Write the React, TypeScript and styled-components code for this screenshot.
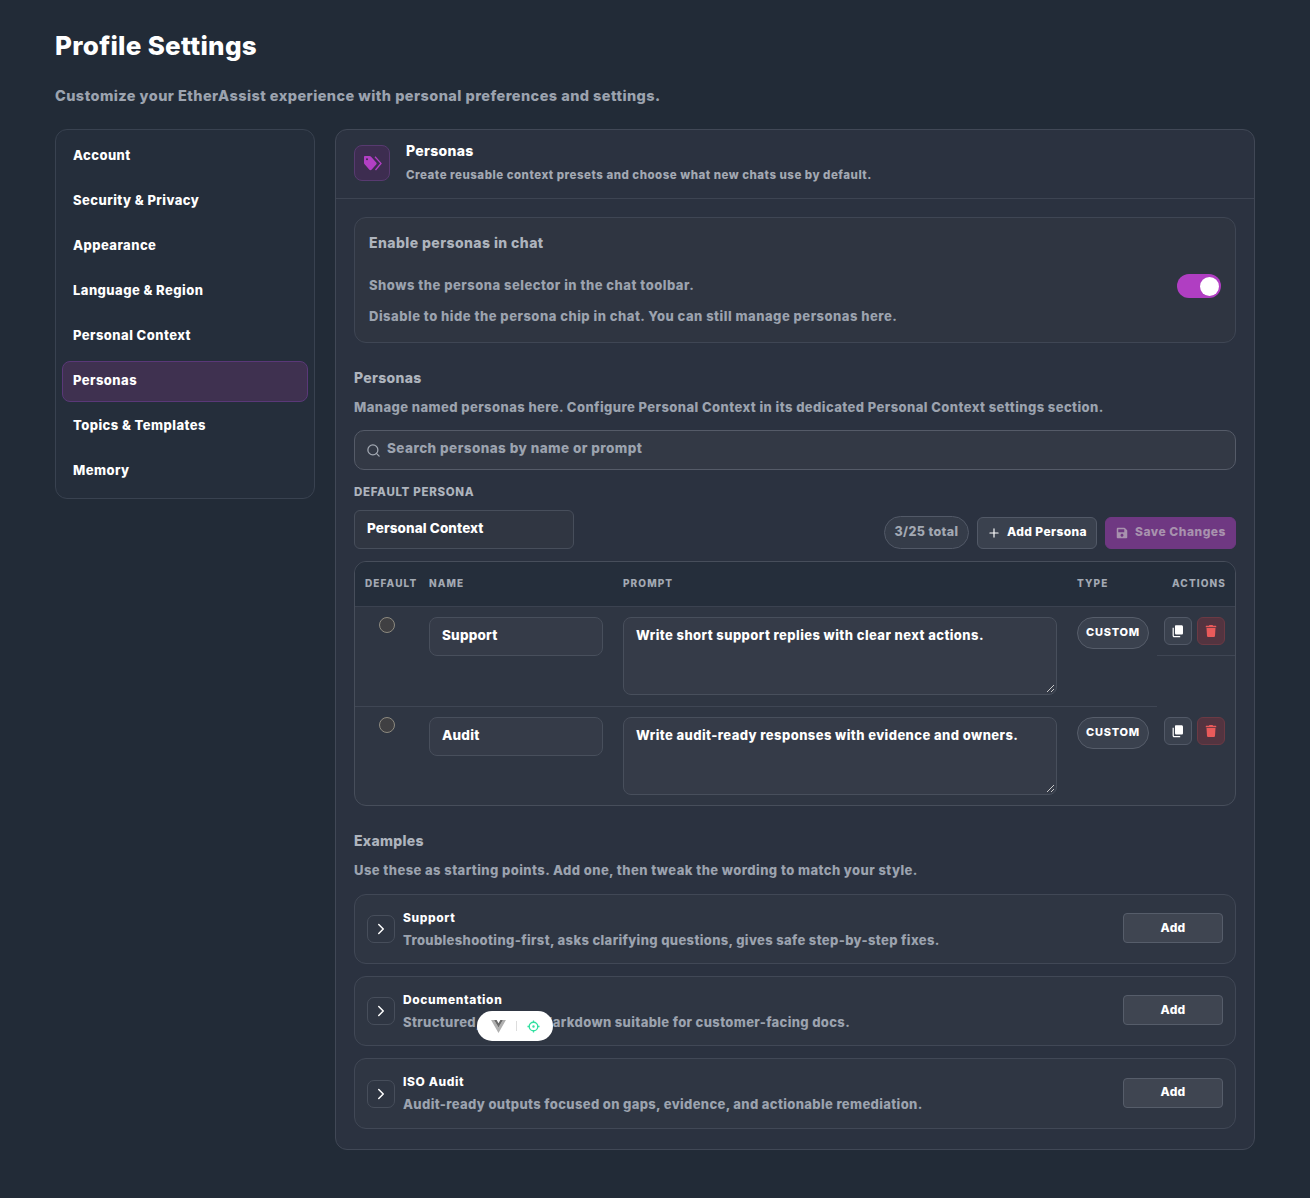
import React from 'react'
import styled, { createGlobalStyle } from 'styled-components'
import { ChevronRight, Plus, Search } from 'lucide-react'
import { FaSave, FaTrash } from 'react-icons/fa'

const GlobalStyle = createGlobalStyle`
  * { box-sizing: border-box; }
  html, body { margin: 0; background: #222b37; }
  body { font-family: Inter, "Liberation Sans", sans-serif; font-weight: 800; color: #fff; }
`

const Page = styled.div`
  position: relative;
  width: 1310px;
  height: 1198px;
  padding: 28px 55px 0;
  overflow: hidden;
`
const Title = styled.h1`
  margin: 0;
  font-size: 26px;
  line-height: 36px;
  font-weight: 800;
  letter-spacing: 0.3px;
`
const Subtitle = styled.p`
  margin: 21px 0 0;
  font-size: 14.5px;
  line-height: 22px;
  letter-spacing: 0.44px;
  color: #9ca3af;
`
const Columns = styled.div`
  display: grid;
  grid-template-columns: 260px 920px;
  gap: 20px;
  margin-top: 22px;
  align-items: start;
`
const Sidebar = styled.nav`
  height: 370px;
  padding: 6px 6px 0;
  display: flex;
  flex-direction: column;
  gap: 4px;
  background: #252e3b;
  border: 1px solid #394250;
  border-radius: 12px;
`
const NavItem = styled.div<{ $active?: boolean }>`
  height: 41px;
  padding: 0 10px 3px;
  display: flex;
  align-items: center;
  font-size: 13px;
  letter-spacing: 0.45px;
  border-radius: 8px;
  border: 1px solid ${p => (p.$active ? '#5a3878' : 'transparent')};
  background: ${p => (p.$active ? '#3f3150' : 'transparent')};
`
const Panel = styled.section`
  height: 1021px;
  background: #2b3240;
  border: 1px solid #414856;
  border-radius: 12px;
`
const PanelHeader = styled.header`
  height: 69px;
  padding: 15px 18px 0;
  display: flex;
  gap: 16px;
  border-bottom: 1px solid #3d4452;
`
const HeaderIcon = styled.div`
  width: 36px;
  height: 36px;
  display: flex;
  align-items: center;
  justify-content: center;
  background: #3d2d50;
  border: 1px solid #583a70;
  border-radius: 8px;
`
const HeaderTitle = styled.div`
  margin-top: -1px;
  font-size: 14px;
  line-height: 14px;
  letter-spacing: 0.3px;
`
const HeaderText = styled.div`
  margin-top: 10px;
  font-size: 11.5px;
  line-height: 14px;
  letter-spacing: 0.5px;
  color: #a3a9b3;
`
const PanelBody = styled.div`
  padding: 18px 18px 0;
`
const EnableCard = styled.div`
  height: 126px;
  padding: 16px 14px 0;
  display: flex;
  justify-content: space-between;
  align-items: center;
  background: #2f3541;
  border: 1px solid #3f4654;
  border-radius: 12px;
`
const CardTitle = styled.div`
  font-size: 14px;
  line-height: 18px;
  letter-spacing: 0.42px;
  color: #aeb4bd;
`
const CardLine = styled.div<{ $top: number }>`
  margin-top: ${p => p.$top}px;
  font-size: 13px;
  line-height: 18px;
  letter-spacing: 0.5px;
  color: #9ca3af;
`
const EnableText = styled.div`
  align-self: flex-start;
`
const Toggle = styled.div`
  width: 44px;
  height: 24px;
  margin-bottom: 4px;
  padding: 2px;
  display: flex;
  justify-content: flex-end;
  background: #b03ec2;
  border-radius: 12px;
`
const Knob = styled.div`
  width: 19px;
  height: 19px;
  margin-top: 0.5px;
  background: #fff;
  border-radius: 50%;
`
const SectionTitle = styled.h2<{ $top: number }>`
  margin: ${p => p.$top}px 0 0;
  font-size: 14px;
  line-height: 18px;
  font-weight: 800;
  letter-spacing: 0.3px;
  color: #aeb4bd;
`
const SectionText = styled.p`
  margin: 11px 0 0;
  font-size: 13px;
  line-height: 18px;
  letter-spacing: 0.43px;
  color: #9ca3af;
`
const SearchBox = styled.div`
  height: 40px;
  margin-top: 14px;
  padding: 0 11px;
  display: flex;
  align-items: center;
  gap: 6px;
  background: #333945;
  border: 1px solid #555b68;
  border-radius: 10px;
`
const SearchText = styled.span`
  margin-bottom: 4px;
  font-size: 13.5px;
  letter-spacing: 0.44px;
  color: #9ca3af;
`
const FieldLabel = styled.div`
  margin-top: 14px;
  font-size: 11.5px;
  line-height: 16px;
  letter-spacing: 0.06em;
  color: #aeb4bd;
`
const ToolRow = styled.div`
  margin-top: 10px;
  display: flex;
  align-items: flex-end;
  justify-content: space-between;
`
const SelectBox = styled.div`
  width: 220px;
  height: 39px;
  padding: 0 12px 3px;
  display: flex;
  align-items: center;
  font-size: 13.5px;
  letter-spacing: 0.1px;
  background: #303642;
  border: 1px solid #474e5b;
  border-radius: 6px;
`
const Tools = styled.div`
  display: flex;
  align-items: center;
  gap: 8px;
`
const CountChip = styled.div`
  width: 85px;
  height: 33px;
  padding-bottom: 2px;
  display: flex;
  align-items: center;
  justify-content: center;
  font-size: 12.5px;
  letter-spacing: 0.38px;
  color: #a3a9b3;
  background: #353c49;
  border: 1px solid #525967;
  border-radius: 17px;
`
const ToolButton = styled.div<{ $primary?: boolean }>`
  width: ${p => (p.$primary ? 131 : 120)}px;
  height: 32px;
  padding-left: ${p => (p.$primary ? 10 : 9)}px;
  display: flex;
  align-items: center;
  gap: ${p => (p.$primary ? 7 : 6)}px;
  font-size: 12px;
  letter-spacing: ${p => (p.$primary ? 0.52 : 0.38)}px;
  white-space: nowrap;
  border-radius: 6px;
  color: ${p => (p.$primary ? '#a892ae' : '#fff')};
  background: ${p => (p.$primary ? '#6f3882' : '#3a414e')};
  border: 1px solid ${p => (p.$primary ? '#6f3882' : '#525967')};
`
const ButtonLabel = styled.span`
  margin-bottom: 3px;
`
const TableWrap = styled.div`
  margin-top: 12px;
  height: 245px;
  overflow: hidden;
  background: #2f3643;
  border: 1px solid #474e5b;
  border-radius: 12px;
`
const Table = styled.table`
  width: 100%;
  border-collapse: collapse;
  table-layout: fixed;
`
const HeadCell = styled.th<{ $align?: string; $first?: boolean }>`
  height: 44px;
  padding: 0 11px 2px ${p => (p.$first ? 10 : 0)}px;
  font-size: 10px;
  font-weight: 800;
  letter-spacing: 0.11em;
  color: #a3a9b3;
  text-align: ${p => p.$align || 'left'};
  background: #252e3b;
  border-bottom: 1px solid #3b4250;
`
const Cell = styled.td<{ $line?: boolean }>`
  padding: 10px 0 0;
  height: 100px;
  vertical-align: top;
  border-bottom: 1px solid ${p => (p.$line ? '#3f4654' : 'transparent')};
`
const Radio = styled.div`
  width: 16px;
  height: 16px;
  margin: 0 0 0 24px;
  background: #3f3f42;
  border: 1px solid #8d8a80;
  border-radius: 50%;
`
const NameInput = styled.div`
  width: 174px;
  height: 39.5px;
  padding: 0 12px 3px;
  display: flex;
  align-items: center;
  font-size: 13.5px;
  letter-spacing: 0.2px;
  background: #353b48;
  border: 1px solid #484f5c;
  border-radius: 8px;
`
const PromptInput = styled.div`
  position: relative;
  width: 434px;
  height: 78.5px;
  padding: 8px 12px;
  font-size: 13px;
  line-height: 18px;
  letter-spacing: 0.42px;
  background: #353b48;
  border: 1px solid #484f5c;
  border-radius: 8px;
`
const Grip = styled.svg`
  position: absolute;
  right: 1px;
  bottom: 1px;
`
const TypeChip = styled.div`
  width: 72px;
  height: 32px;
  padding-bottom: 2px;
  display: flex;
  align-items: center;
  justify-content: center;
  font-size: 11px;
  font-weight: 800;
  letter-spacing: 0.07em;
  background: #3a414e;
  border: 1px solid #565d6a;
  border-radius: 16px;
`
const ActionsCell = styled.div<{ $line?: boolean }>`
  height: 39px;
  padding-left: 7px;
  display: flex;
  gap: 5px;
  border-bottom: 1px solid ${p => (p.$line ? '#3f4654' : 'transparent')};
`
const IconButton = styled.div<{ $danger?: boolean }>`
  width: 28px;
  height: 28px;
  display: flex;
  align-items: center;
  justify-content: center;
  font-size: 12px;
  border-radius: 6px;
  color: ${p => (p.$danger ? '#ea5a5a' : '#fff')};
  background: ${p => (p.$danger ? '#533440' : '#3a414e')};
  border: 1px solid ${p => (p.$danger ? '#6b3a44' : '#525967')};
`
const ExampleList = styled.div`
  margin-top: 15px;
  display: flex;
  flex-direction: column;
  gap: 12px;
`
const ExampleCard = styled.div<{ $tall?: boolean }>`
  height: ${p => (p.$tall ? 71 : 70)}px;
  padding: 0 12px;
  display: flex;
  align-items: center;
  background: #2f3643;
  border: 1px solid #414856;
  border-radius: 12px;
`
const Expander = styled.div`
  width: 28px;
  height: 28px;
  display: flex;
  align-items: center;
  justify-content: center;
  border: 1px solid #474e5b;
  border-radius: 7px;
`
const ExampleText = styled.div`
  flex: 1;
  margin-left: 8px;
`
const ExampleName = styled.div`
  font-size: 12px;
  line-height: 16px;
  letter-spacing: 0.6px;
`
const ExampleDesc = styled.div`
  margin-top: 5px;
  font-size: 13px;
  line-height: 18px;
  letter-spacing: 0.36px;
  color: #9ca3af;
`
const AddButton = styled.div`
  width: 100px;
  height: 30px;
  margin-bottom: 2px;
  padding-bottom: 2px;
  display: flex;
  align-items: center;
  justify-content: center;
  font-size: 12px;
  letter-spacing: 0.2px;
  background: #3f4551;
  border: 1px solid #565d6a;
  border-radius: 4px;
`
const DevPill = styled.div`
  position: absolute;
  left: 477px;
  top: 1011px;
  width: 76px;
  height: 30px;
  padding-left: 14px;
  display: flex;
  align-items: center;
  gap: 10px;
  background: #fff;
  border-radius: 15px;
`
const PillDivider = styled.div`
  width: 1px;
  height: 10px;
  background: #ddd;
`

const nav = ['Account', 'Security & Privacy', 'Appearance', 'Language & Region', 'Personal Context', 'Personas', 'Topics & Templates', 'Memory']
const personas = [
  { name: 'Support', prompt: 'Write short support replies with clear next actions.' },
  { name: 'Audit', prompt: 'Write audit-ready responses with evidence and owners.' },
]
const examples = [
  { name: 'Support', desc: 'Troubleshooting-first, asks clarifying questions, gives safe step-by-step fixes.' },
  { name: 'Documentation', desc: 'Structured, concise Markdown suitable for customer-facing docs.' },
  { name: 'ISO Audit', desc: 'Audit-ready outputs focused on gaps, evidence, and actionable remediation.' },
]

const CopyIcon = () => (
  <svg width="14" height="14" viewBox="0 0 14 14" fill="#fff">
    <path d="M5 1.2h5.4c1 0 1.6.6 1.6 1.6v6.4c0 .8-.6 1.4-1.4 1.4H5.4c-.8 0-1.4-.6-1.4-1.4V2.2c0-.6.4-1 1-1z" />
    <path d="M2.8 3.8v7.6c0 .4.3.7.7.7h5.7v1.1H3.2c-1 0-1.6-.6-1.6-1.5V3.8z" />
  </svg>
)

const TagIcon = () => (
  <svg width="19" height="16" viewBox="0 0 19 16">
    <path
      d="M2 1H6.5C7 1 7.5 1.2 7.9 1.6L13.2 7.4C13.8 8 13.8 8.8 13.2 9.4L8.5 14.8C7.9 15.4 7 15.4 6.4 14.8L1.4 9C1.1 8.6 1 8.3 1 7.9V2C1 1.4 1.4 1 2 1Z"
      fill="#b23fc4"
    />
    <circle cx="4" cy="4.2" r="1" fill="#3d2d50" />
    <path d="M12 1.8L18 8.4L12.5 15" fill="none" stroke="#b23fc4" strokeWidth="1.3" />
  </svg>
)

export default function App() {
  return (
    <Page>
      <GlobalStyle />
      <Title>Profile Settings</Title>
      <Subtitle>Customize your EtherAssist experience with personal preferences and settings.</Subtitle>
      <Columns>
        <Sidebar>
          {nav.map(n => (
            <NavItem key={n} $active={n === 'Personas'}>{n}</NavItem>
          ))}
        </Sidebar>
        <Panel>
          <PanelHeader>
            <HeaderIcon><TagIcon /></HeaderIcon>
            <div>
              <HeaderTitle>Personas</HeaderTitle>
              <HeaderText>Create reusable context presets and choose what new chats use by default.</HeaderText>
            </div>
          </PanelHeader>
          <PanelBody>
            <EnableCard>
              <EnableText>
                <CardTitle>Enable personas in chat</CardTitle>
                <CardLine $top={24}>Shows the persona selector in the chat toolbar.</CardLine>
                <CardLine $top={13}>Disable to hide the persona chip in chat. You can still manage personas here.</CardLine>
              </EnableText>
              <Toggle><Knob /></Toggle>
            </EnableCard>
            <SectionTitle $top={26}>Personas</SectionTitle>
            <SectionText>Manage named personas here. Configure Personal Context in its dedicated Personal Context settings section.</SectionText>
            <SearchBox>
              <Search size={15} color="#a3a9b3" />
              <SearchText>Search personas by name or prompt</SearchText>
            </SearchBox>
            <FieldLabel>DEFAULT PERSONA</FieldLabel>
            <ToolRow>
              <SelectBox>Personal Context</SelectBox>
              <Tools>
                <CountChip>3/25 total</CountChip>
                <ToolButton><Plus size={14} /><ButtonLabel>Add Persona</ButtonLabel></ToolButton>
                <ToolButton $primary><FaSave size={12} /><ButtonLabel>Save Changes</ButtonLabel></ToolButton>
              </Tools>
            </ToolRow>
            <TableWrap>
              <Table>
                <colgroup>
                  <col width={74} />
                  <col width={194} />
                  <col width={454} />
                  <col width={80} />
                  <col width={80} />
                </colgroup>
                <thead>
                  <tr>
                    <HeadCell $first>DEFAULT</HeadCell>
                    <HeadCell>NAME</HeadCell>
                    <HeadCell>PROMPT</HeadCell>
                    <HeadCell>TYPE</HeadCell>
                    <HeadCell $align="right">ACTIONS</HeadCell>
                  </tr>
                </thead>
                <tbody>
                  {personas.map((p, i) => (
                    <tr key={p.name}>
                      <Cell $line={i === 0}><Radio /></Cell>
                      <Cell $line={i === 0}><NameInput>{p.name}</NameInput></Cell>
                      <Cell $line={i === 0}>
                        <PromptInput>
                          {p.prompt}
                          <Grip width="9" height="9" viewBox="0 0 9 9">
                            <path d="M1 8 L8 1 M5 8 L8 5" stroke="#c8c8c8" strokeWidth="1" />
                          </Grip>
                        </PromptInput>
                      </Cell>
                      <Cell $line={i === 0}><TypeChip>CUSTOM</TypeChip></Cell>
                      <Cell>
                        <ActionsCell $line={i === 0}>
                          <IconButton><CopyIcon /></IconButton>
                          <IconButton $danger><FaTrash /></IconButton>
                        </ActionsCell>
                      </Cell>
                    </tr>
                  ))}
                </tbody>
              </Table>
            </TableWrap>
            <SectionTitle $top={26}>Examples</SectionTitle>
            <SectionText>Use these as starting points. Add one, then tweak the wording to match your style.</SectionText>
            <ExampleList>
              {examples.map((e, i) => (
                <ExampleCard key={e.name} $tall={i === 2}>
                  <Expander><ChevronRight size={18} /></Expander>
                  <ExampleText>
                    <ExampleName>{e.name}</ExampleName>
                    <ExampleDesc>{e.desc}</ExampleDesc>
                  </ExampleText>
                  <AddButton>Add</AddButton>
                </ExampleCard>
              ))}
            </ExampleList>
          </PanelBody>
        </Panel>
      </Columns>
      <DevPill>
        <svg width="15" height="13" viewBox="0 0 16 14">
          <path d="M0 0 H3.2 L8 8.2 L12.8 0 H16 L8 14 Z" fill="#b0b0b0" />
          <path d="M3.2 0 H6 L8 3.4 L10 0 H12.8 L8 8.2 Z" fill="#6a6a6a" />
        </svg>
        <PillDivider />
        <svg width="13" height="13" viewBox="0 0 14 14" fill="none" stroke="#34e0a1" strokeWidth="1.4">
          <circle cx="7" cy="7" r="4.6" />
          <circle cx="7" cy="7" r="0.6" fill="#34e0a1" />
          <path d="M7 0.5 V3 M7 11 V13.5 M0.5 7 H3 M11 7 H13.5" />
        </svg>
      </DevPill>
    </Page>
  )
}
